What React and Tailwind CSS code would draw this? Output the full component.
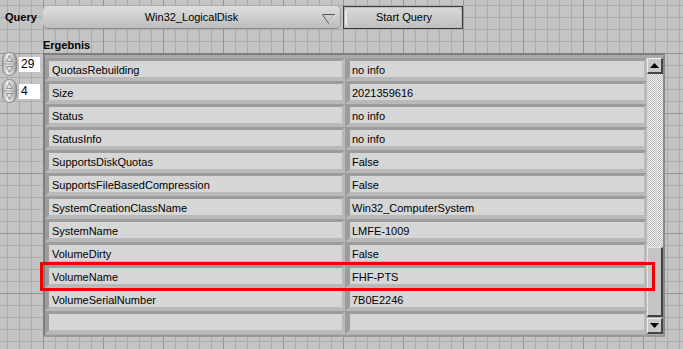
import React from 'react';

const rows = [
  ['QuotasRebuilding', 'no info'],
  ['Size', '2021359616'],
  ['Status', 'no info'],
  ['StatusInfo', 'no info'],
  ['SupportsDiskQuotas', 'False'],
  ['SupportsFileBasedCompression', 'False'],
  ['SystemCreationClassName', 'Win32_ComputerSystem'],
  ['SystemName', 'LMFE-1009'],
  ['VolumeDirty', 'False'],
  ['VolumeName', 'FHF-PTS'],
  ['VolumeSerialNumber', '7B0E2246'],
  ['', ''],
];

function Spinner() {
  return (
    <svg width="15" height="24" viewBox="0 0 15 24">
      <defs>
        <linearGradient id="spin" x1="0" x2="1" y1="0" y2="0">
          <stop offset="0" stopColor="#a9a9a9" />
          <stop offset="0.35" stopColor="#ececec" />
          <stop offset="0.7" stopColor="#d0d0d0" />
          <stop offset="1" stopColor="#8e8e8e" />
        </linearGradient>
      </defs>
      <rect x="0.5" y="0.5" width="14" height="23" rx="7" fill="url(#spin)" stroke="#8a8a8a" />
      <line x1="1" y1="12" x2="14" y2="12" stroke="#9a9a9a" />
      <polygon points="7.5,3.5 4.5,9.5 10.5,9.5" fill="none" stroke="#7a7a7a" strokeWidth="0.8" />
      <polygon points="7.5,20.5 4.5,14.5 10.5,14.5" fill="none" stroke="#7a7a7a" strokeWidth="0.8" />
    </svg>
  );
}

function NumBox({ value }) {
  return (
    <div className="flex items-center h-[24px] mb-[3px]">
      <div className="ml-[2px]">
        <Spinner />
      </div>
      <div className="ml-[2px] w-[21px] h-[15px] bg-white text-[12px] leading-[15px] pl-[2px] text-black">
        {value}
      </div>
    </div>
  );
}

function Cell({ text, width, left }) {
  return (
    <div
      className={`${width} ${left} h-[23px] border-t-[3px] border-t-[#9c9c9c] border-l-[#9c9c9c] border-r-[3px] border-r-[#b9b9b9] border-b-[4px] border-b-[#b9b9b9] bg-[#d6d6d6] text-[11px] leading-[18px] text-black whitespace-nowrap overflow-hidden`}
    >
      {text}
    </div>
  );
}

function ArrowButton({ up }) {
  return (
    <div className="w-[16px] h-[16px] bg-[#c8c8c8] border-t border-l border-t-[#efefef] border-l-[#efefef] border-b-2 border-r-2 border-b-[#444] border-r-[#444] flex items-center justify-center">
      <svg width="9" height="5" viewBox="0 0 9 5">
        {up ? <polygon points="4.5,0 9,5 0,5" fill="#000" /> : <polygon points="0,0 9,0 4.5,5" fill="#000" />}
      </svg>
    </div>
  );
}

export default function App() {
  return (
    <div
      className="relative w-[683px] h-[349px] overflow-hidden bg-[#c4c4c4] bg-[image:linear-gradient(to_right,#949494_1px,transparent_1px),linear-gradient(to_bottom,#949494_1px,transparent_1px),linear-gradient(to_right,#acacac_1px,transparent_1px),linear-gradient(to_bottom,#acacac_1px,transparent_1px)] bg-size-[60px_60px,60px_60px,12px_12px,12px_12px] bg-position-[43px_53px]"
      style={{ fontFamily: '"Liberation Sans", Arial, sans-serif' }}
    >
      {/* top bar */}
      <div className="flex items-center mt-[6px] h-[23px]">
        <div className="w-[43px] pl-[5px] text-[11px] font-bold text-black">Query</div>
        <div className="relative w-[298px] h-[23px] rounded-[5px] bg-gradient-to-b from-[#dedede] to-[#bdbdbd] border-b border-b-[#8c8c8c] border-r border-r-[#9a9a9a] flex items-center justify-center text-[11px] text-black">
          Win32_LogicalDisk
          <svg className="absolute left-[279px] top-[8px]" width="13" height="10" viewBox="0 0 13 10">
            <polygon points="0.5,0.5 12.5,0.5 6.5,9.5" fill="none" stroke="#5a5a5a" strokeWidth="1" />
            <line x1="7" y1="9" x2="12.5" y2="1" stroke="#f4f4f4" strokeWidth="1" />
          </svg>
        </div>
        <div className="ml-[2px] w-[120px] h-[23px] border border-[#3c3c3c] bg-[#bcbcbc] p-[1px]">
          <div className="w-full h-full rounded-[4px] bg-gradient-to-b from-[#d8d8d8] to-[#c2c2c2] border-l-2 border-l-[#e8e8e8] flex items-center justify-center text-[11px] text-black">
            Start Query
          </div>
        </div>
      </div>

      {/* main area */}
      <div className="flex mt-[11px]">
        <div className="w-[43px] pt-[12px]">
          <NumBox value="29" />
          <NumBox value="4" />
        </div>
        <div className="flex flex-col">
          <div className="h-[13px] leading-[11px] text-[11px] font-bold text-black">Ergebnis</div>
          <div className="w-[622px] h-[284px] border-t-2 border-l-2 border-t-[#7e7e7e] border-l-[#7e7e7e] border-r-2 border-r-[#8a8a8a] border-b-2 border-b-[#9a9a9a] bg-[#aaaaaa] pt-[3px] flex">
            <div className="flex flex-col">
              {rows.map(([name, value], i) => (
                <div key={i} className="flex">
                  <Cell text={name} width="w-[300px]" left="border-l-[4px] pl-[3px]" />
                  <Cell text={value} width="w-[302px]" left="border-l-[5px] pl-[2px]" />
                </div>
              ))}
            </div>
            <div className="w-[16px] h-[276px] flex flex-col">
              <ArrowButton up />
              <div className="h-[173px] bg-[repeating-conic-gradient(#bcbcbc_0_25%,#f2f2f2_0_50%)] bg-size-[2px_2px]" />
              <div className="h-[70px] bg-[#c4c4c4] border-t border-l border-t-[#e6e6e6] border-l-[#e6e6e6] border-b-2 border-r-2 border-b-[#444] border-r-[#444]" />
              <div className="h-[1px] bg-[#aaaaaa]" />
              <ArrowButton />
            </div>
          </div>
        </div>
      </div>

      {/* highlight annotation */}
      <div className="absolute left-[40px] top-[262px] w-[615px] h-[29px] border-[3px] border-[#ee0000]" />
    </div>
  );
}
